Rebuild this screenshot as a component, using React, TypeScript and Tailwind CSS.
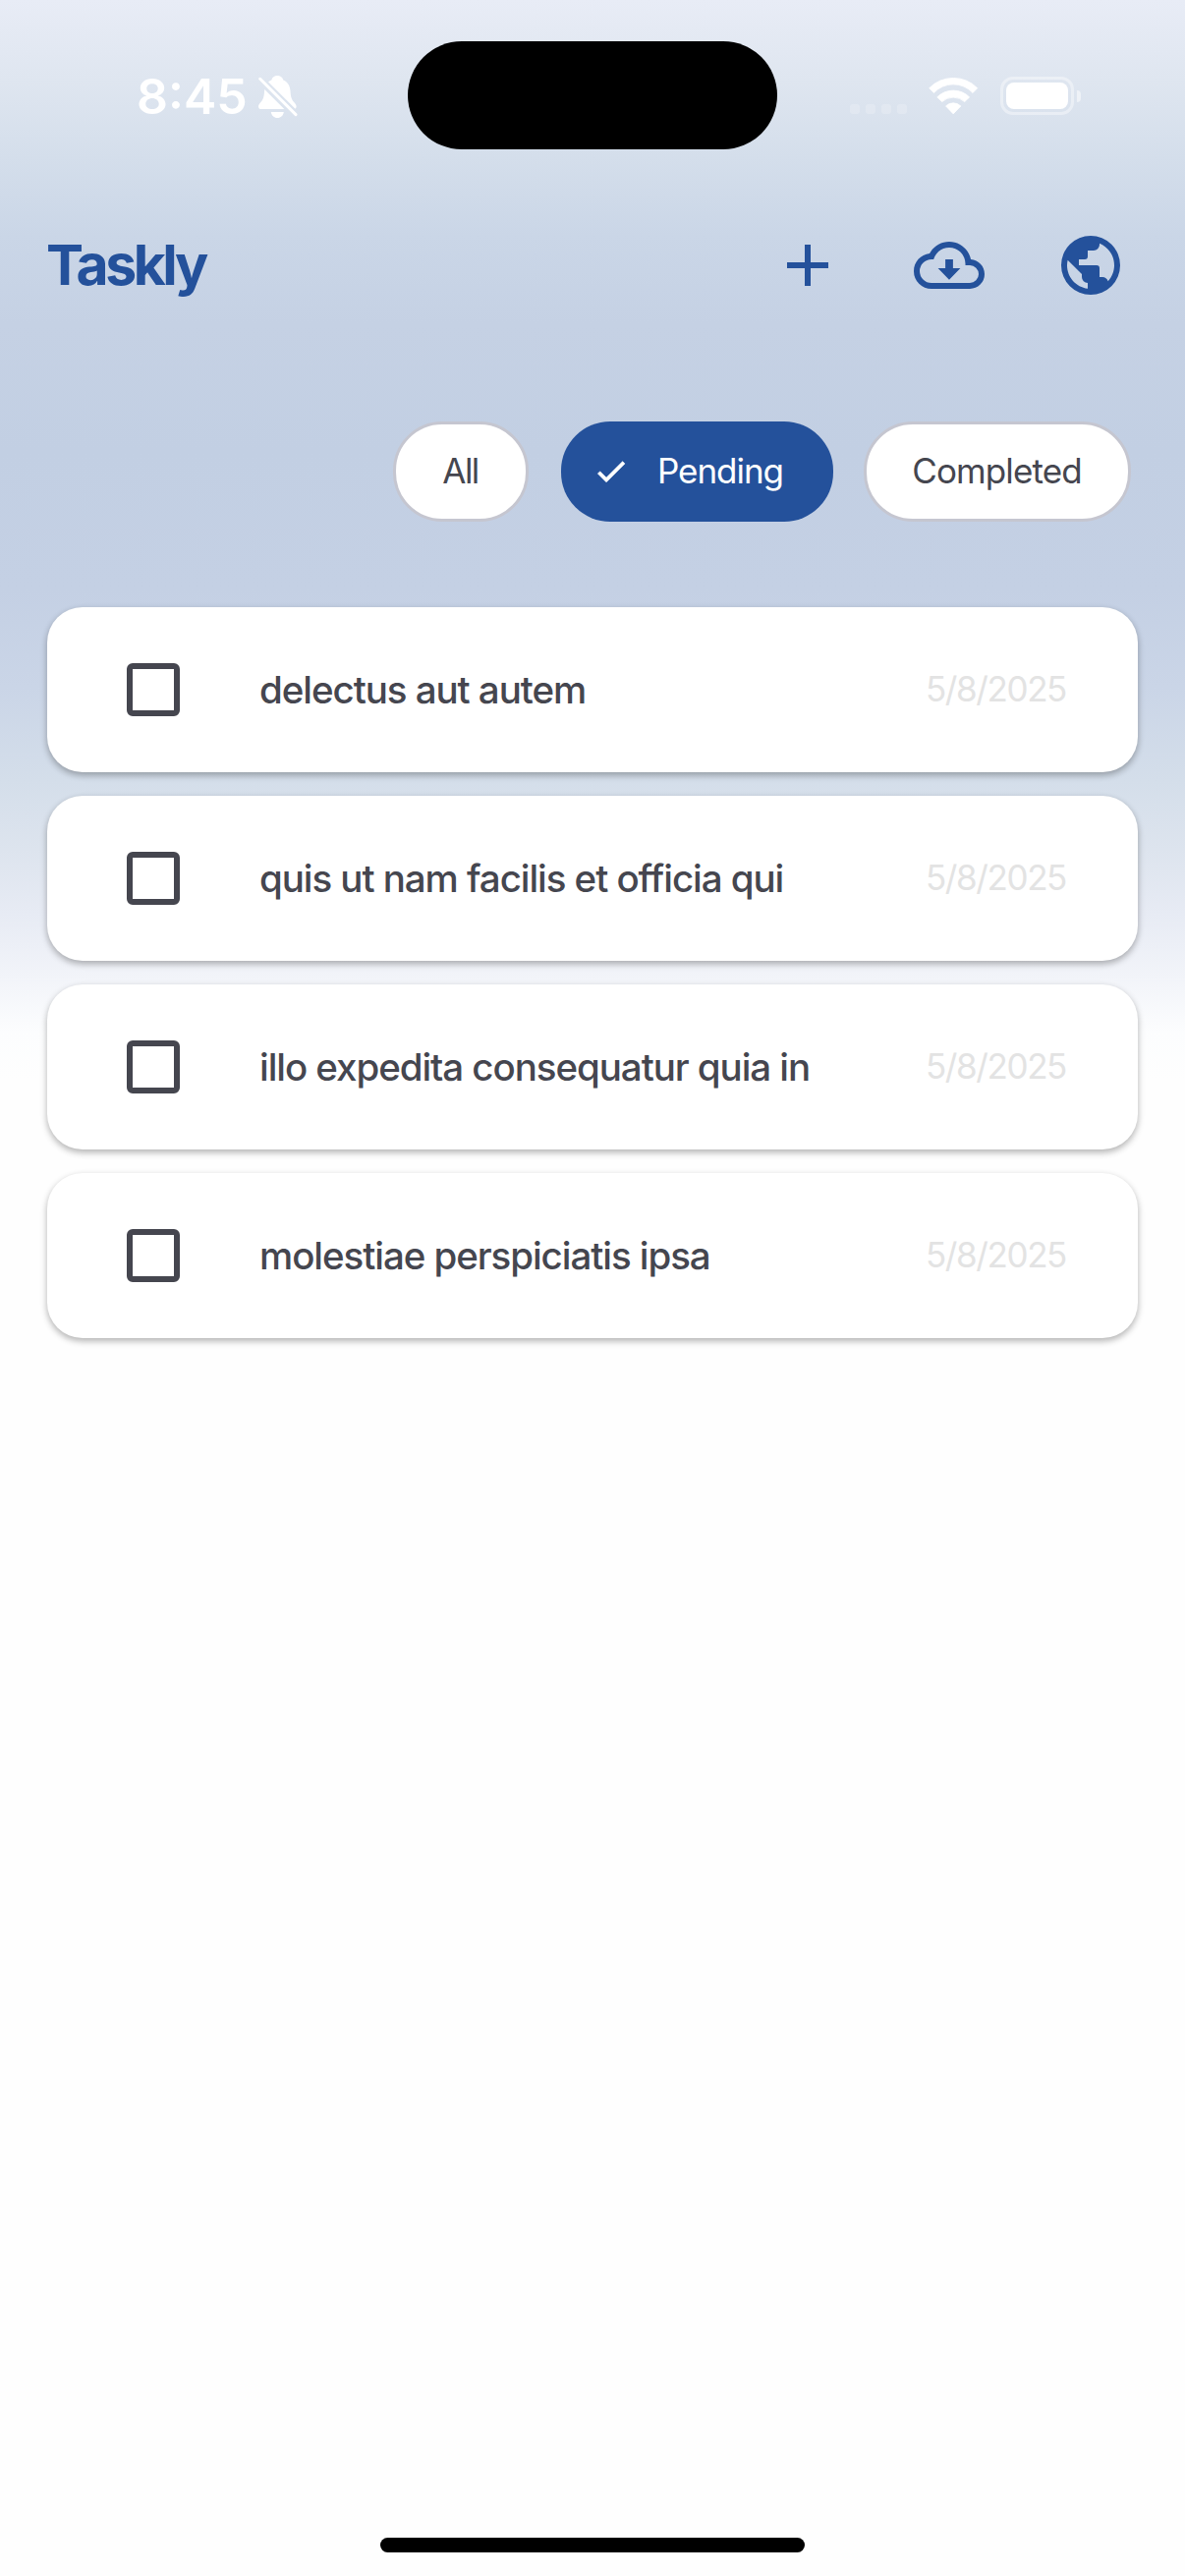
const NAVY = '#24519b';

type Task = { title: string; date: string };

const tasks: Task[] = [
  { title: 'delectus aut autem', date: '5/8/2025' },
  { title: 'quis ut nam facilis et officia qui', date: '5/8/2025' },
  { title: 'illo expedita consequatur quia in', date: '5/8/2025' },
  { title: 'molestiae perspiciatis ipsa', date: '5/8/2025' },
];

function BellSlash() {
  return (
    <svg width="40" height="44" viewBox="0 0 40 44" fill="none">
      <mask id="slash-gap" maskUnits="userSpaceOnUse" x="0" y="0" width="40" height="44">
        <rect width="40" height="44" fill="white" />
        <path d="M-4 -2L44 46" stroke="black" strokeWidth="8" />
      </mask>
      <g mask="url(#slash-gap)" fill="white">
        <path d="M19.3 0C22.3 0 24.6 1.8 25.3 4.4C29.8 6.3 32.2 10.4 32.5 15.5C32.8 20.8 33.4 23.8 36 26.8C37.6 28.6 38.6 29.8 38.6 31.4C38.6 33 37.4 34 35.6 34H3C1.200 34 0 33 0 31.400C0 29.800 1 28.600 2.600 26.800C5.200 23.800 5.800 20.800 6.100 15.500C6.400 10.400 8.800 6.300 13.300 4.400C14 1.800 16.300 0 19.300 0Z" />
        <path d="M12.800 37H25.800C25.400 40.400 22.800 43 19.300 43C15.800 43 13.200 40.400 12.800 37Z" />
      </g>
      <path d="M1.700 3.300L38 39.600" stroke="white" strokeWidth="3" strokeLinecap="round" />
    </svg>
  );
}

function Wifi() {
  return (
    <svg width="51" height="38" viewBox="0 0 51 38" fill="white" stroke="white" strokeWidth="0.8" strokeLinejoin="round">
      <path d="M0.700 10.700A34.300 34.300 0 0 1 49.700 10.700L45 15.500A27 27 0 0 0 5.400 15.500Z" />
      <path d="M8.800 19.900A23.200 23.200 0 0 1 41.600 19.900L36.700 24.600A17 17 0 0 0 13.700 24.600Z" />
      <path d="M17.600 28.900A11 11 0 0 1 32.800 28.900L25.200 36.900Z" />
    </svg>
  );
}

function Battery() {
  return (
    <div className="flex items-center gap-[3px]">
      <div className="h-[39px] w-[75px] rounded-[13px] border-[3px] border-white/40 p-[3px]">
        <div className="h-full w-full rounded-[8px] bg-white" />
      </div>
      <div className="h-[12px] w-[4px] rounded-r-full bg-white/50" />
    </div>
  );
}

function StatusBar() {
  return (
    <div className="flex h-[174px] items-start">
      <div className="flex h-[196px] w-[415px] items-center pl-[139px]">
        <span className="w-[124px] text-[50px] leading-none font-semibold text-white">8:45</span>
        <div className="pt-px">
          <BellSlash />
        </div>
      </div>
      <div className="mt-[42px] h-[110px] w-[376px] rounded-[55px] bg-black" />
      <div className="flex h-[195px] flex-1 items-center pl-[74px]">
        <div className="flex gap-[6px] pt-[26px]">
          {[0, 1, 2, 3].map((i) => (
            <div key={i} className="size-[10px] rounded-[3px] bg-white/20" />
          ))}
        </div>
        <div className="ml-[22px] w-[73px]">
          <Wifi />
        </div>
        <Battery />
      </div>
    </div>
  );
}

function HeaderIcon({ d }: { d: string }) {
  return (
    <button className="flex size-[144px] items-center justify-center">
      <svg width="72" height="72" viewBox="0 0 24 24" fill={NAVY}>
        <path d={d} />
      </svg>
    </button>
  );
}

function Header() {
  return (
    <header className="flex h-[192px] items-center justify-between pr-[24px] pl-[47px]">
      <h1 className="pb-[2px] text-[57px] leading-none font-bold tracking-[-3.4px] text-[#24519b]">Taskly</h1>
      <div className="flex">
        <HeaderIcon d="M19,13H13V19H11V13H5V11H11V5H13V11H19V13Z" />
        <HeaderIcon d="M8.2,13H10.700V10H13.300V13H15.800L12,16.900L8.200,13M19,18A3,3 0 0,0 22,15A3,3 0 0,0 19,12H17.500V11.500A5.500,5.500 0 0,0 12,6C9.500,6 7.370,7.690 6.710,10H6A4,4 0 0,0 2,14A4,4 0 0,0 6,18H19M19.350,10.030C21.950,10.220 24,12.360 24,15A5,5 0 0,1 19,20H6A6,6 0 0,1 0,14C0,10.900 2.340,8.360 5.350,8.030C6.600,5.640 9.110,4 12,4C15.640,4 18.670,6.590 19.350,10.030Z" />
        <HeaderIcon d="M17.900,17.390C17.640,16.590 16.890,16 16,16H15V13A1,1 0 0,0 14,12H8V10H10A1,1 0 0,0 11,9V7H13A2,2 0 0,0 15,5V4.590C17.930,5.770 20,8.640 20,12C20,14.080 19.200,15.970 17.900,17.390M11,19.930C7.050,19.440 4,16.080 4,12C4,11.380 4.080,10.780 4.210,10.210L9,15V16A2,2 0 0,0 11,18M12,2A10,10 0 0,0 2,12A10,10 0 0,0 12,22A10,10 0 0,0 22,12A10,10 0 0,0 12,2Z" />
      </div>
    </header>
  );
}

function Filters() {
  return (
    <nav className="mt-[63px] flex h-[102px] justify-end pr-[55px] text-[35px] leading-none font-normal tracking-[-1.05px] text-[#45464f]">
      <button className="flex w-[138px] items-center justify-center rounded-[50px] border-[3px] border-[#c5c6d0] bg-white pr-px pb-px">
        <span className="tracking-[-1.6px]">All</span>
      </button>
      <button className="ml-[33px] flex w-[277px] items-center rounded-[50px] bg-[#24519b] pb-px pl-[32px] text-white">
        <svg width="37.500" height="37.500" viewBox="0 0 24 24" fill="currentColor" stroke="currentColor" strokeWidth="0.5">
          <path d="M21,7L9,19L3.500,13.500L4.910,12.090L9,16.170L19.590,5.590L21,7Z" />
        </svg>
        <span className="ml-[28.5px]">Pending</span>
      </button>
      <button className="ml-[31px] flex w-[272px] items-center justify-center rounded-[50px] border-[3px] border-[#c5c6d0] bg-white pr-px pb-px">
        <span className="tracking-[-0.9px]">Completed</span>
      </button>
    </nav>
  );
}

function TaskCard({ title, date }: Task) {
  return (
    <li className="flex h-[168px] items-center rounded-[36px] bg-white pr-[73px] pl-[81px] shadow-[0_3px_9px_rgba(0,0,0,0.1),0_3px_6px_rgba(0,0,0,0.22)]">
      <div className="size-[54px] rounded-[6px] border-[6px] border-[#45464f]" />
      <span className="ml-[81px] flex-1 text-[38.5px] leading-none font-medium tracking-[-1.06px] text-[#45464f]">
        {title}
      </span>
      <span className="pb-px text-[35px] leading-none font-normal tracking-[-1.4px] text-[#e3e3e3]">{date}</span>
    </li>
  );
}

export default function App() {
  return (
    <div className="flex h-[2622px] w-[1206px] flex-col overflow-hidden bg-[linear-gradient(180deg,#e8ecf6_0px,#dfe6f0_80px,#d4deeb_160px,#cad6e7_240px,#c5d1e4_330px,#c2cfe3_460px,#c4d0e4_600px,#cad5e7_700px,#d4deea_795px,#dde4ee_865px,#e7ebf4_930px,#f2f4f9_995px,#fcfdfe_1050px,#fefefe_1100px,#fefefe_2622px)] font-['Inter',sans-serif]">
      <StatusBar />
      <Header />
      <Filters />
      <ul className="mt-[87px] flex flex-col gap-[24px] px-[48px]">
        {tasks.map((task) => (
          <TaskCard key={task.title} {...task} />
        ))}
      </ul>
      <div className="mt-auto mb-[24px] h-[15px] w-[432px] self-center rounded-full bg-black" />
    </div>
  );
}
